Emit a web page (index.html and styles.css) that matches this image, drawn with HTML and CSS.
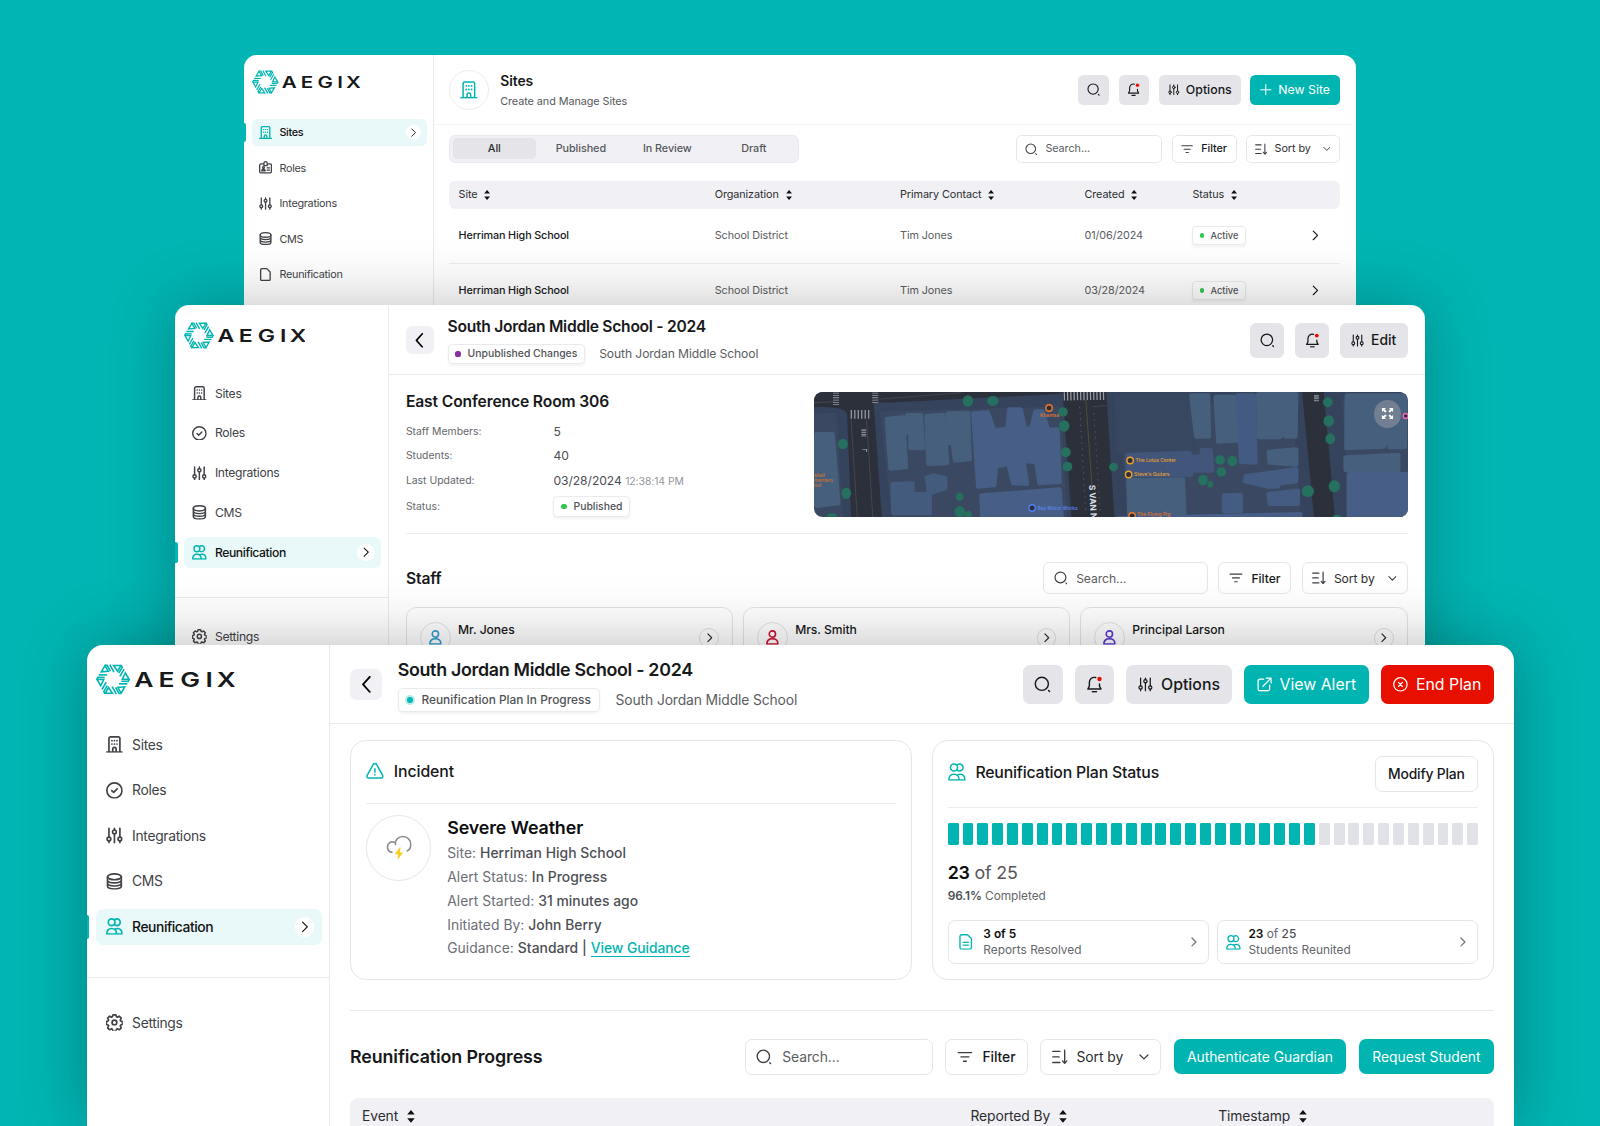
FILE: index.html
```
<!DOCTYPE html>
<html lang="en">
<head>
    <meta charset="UTF-8">
    <meta name="viewport" content="width=device-width, initial-scale=1.0">
    <title>Aegix</title>
    <link rel="stylesheet" href="styles.css">
</head>
<body>
    <!-- Icon sprite -->
    <svg class="sprite" xmlns="http://www.w3.org/2000/svg">
        <symbol id="logo" viewBox="0 0 140 31">
            <g transform="translate(17.2 15.5)" fill="none" stroke="#00b5b1" stroke-width="1.6">
                <g id="logo-part">
                    <path d="M.6-14H8L4.6-8.2Z"/>
                    <path d="M-3.3-14.8.9-7.4M-8.2-14.2-5.9-14.2-2.6-8.2"/>
                </g>
                <use href="#logo-part" transform="rotate(60)"/>
                <use href="#logo-part" transform="rotate(120)"/>
                <use href="#logo-part" transform="rotate(180)"/>
                <use href="#logo-part" transform="rotate(240)"/>
                <use href="#logo-part" transform="rotate(300)"/>
            </g>
            <text class="logo-text" transform="scale(1.3 1)" x="29.6 48.6 65.4 85 93.8" y="22.8">AEGIX</text>
        </symbol>
        <symbol id="building" viewBox="0 0 20 20">
            <path d="M1 19h18M3.500 19V3a2 2 0 0 1 2-2h9a2 2 0 0 1 2 2v16M8 19v-3.500a2 2 0 0 1 4 0V19"/>
            <path d="M7 5.500h.1M10 5.500h.1M13 5.500h.1M7 9.500h.1M10 9.500h.1M13 9.500h.1" stroke-width="2"/>
        </symbol>
        <symbol id="check" viewBox="0 0 20 20">
            <circle cx="10" cy="10" r="9"/><path d="m6.800 10.200 2.300 2.200 4.200-4.300"/>
        </symbol>
        <symbol id="sliders" viewBox="0 0 20 20">
            <path d="M3.500 1.500V12M3.500 16.500v2M10 1.500v2M10 8v10.500M16.500 1.500V12M16.500 16.500v2"/>
            <circle cx="3.500" cy="14.200" r="2.200"/><circle cx="10" cy="5.800" r="2.200"/><circle cx="16.500" cy="14.200" r="2.200"/>
        </symbol>
        <symbol id="database" viewBox="0 0 20 20">
            <ellipse cx="10" cy="4.500" rx="8.200" ry="3.500"/>
            <path d="M1.800 4.500v11c0 2 3.700 3.500 8.200 3.500s8.200-1.500 8.200-3.500v-11M1.800 8.200c0 2 3.700 3.500 8.200 3.500s8.200-1.500 8.200-3.500M1.800 11.900c0 2 3.700 3.500 8.200 3.500s8.200-1.500 8.200-3.500"/>
        </symbol>
        <symbol id="users" viewBox="0 0 20 20">
            <circle cx="6.700" cy="5" r="4"/>
            <path d="M10 2.300A4 4 0 1 1 10 7.700M1 19c0-4 2.200-6.500 5.600-6.500s5.900 2.500 5.900 6.500ZM10.500 13.500c1-.7 2-1 3.100-1 3.400 0 5.400 2.500 5.400 6.500h-6.500"/>
        </symbol>
        <symbol id="user" viewBox="0 0 20 20">
            <circle cx="10" cy="5.500" r="4.300"/><path d="M2.500 19c0-4.500 3-7 7.500-7s7.500 2.500 7.500 7Z"/>
        </symbol>
        <symbol id="roles" viewBox="0 0 20 20">
            <path d="M7 4.500H3a2 2 0 0 0-2 2V16a2 2 0 0 0 2 2h14a2 2 0 0 0 2-2V6.500a2 2 0 0 0-2-2h-4M7.500 7V3.500a2.500 2.500 0 0 1 5 0V7ZM12.500 10.500h3.500M12.500 14h3.500M4 15c0-3 5.500-3 5.500 0Z"/>
            <circle cx="6.800" cy="10" r="1.500"/>
        </symbol>
        <symbol id="file" viewBox="0 0 20 20">
            <path d="M4.500 1H12l5 5v11a2 2 0 0 1-2 2H4.500a2 2 0 0 1-2-2V3a2 2 0 0 1 2-2Z"/>
        </symbol>
        <symbol id="report" viewBox="0 0 20 20">
            <path d="M4.500 1H12l5 5v11a2 2 0 0 1-2 2H4.500a2 2 0 0 1-2-2V3a2 2 0 0 1 2-2ZM6.500 10.500h6.500M6.500 14h6.500"/>
        </symbol>
        <symbol id="gear" viewBox="0 0 20 20">
            <circle cx="10" cy="10" r="2.800"/>
            <path d="M8.300 1h3.400l.7 2.300 1.100.5 2.200-1.200 2.400 2.400-1.200 2.200.5 1.100 2.100.7v3.400l-2.100.7-.5 1.100 1.200 2.200-2.400 2.400-2.200-1.200-1.100.5-.7 2.300H8.300l-.7-2.300-1.100-.5-2.200 1.200-2.400-2.400 1.200-2.200-.5-1.100L.500 12.400V9l2.100-.7.5-1.100L1.900 5l2.400-2.400 2.200 1.200 1.100-.5Z"/>
        </symbol>
        <symbol id="search" viewBox="0 0 20 20">
            <circle cx="9.300" cy="9.300" r="7.800"/><path d="m17.300 17.300 1.200 1.200"/>
        </symbol>
        <symbol id="bell" viewBox="0 0 20 20">
            <path d="M11.500 1.800C7 .8 4 4 4 7.500V12l-1.800 3.500h15.600L16 12V9.500M7.500 18.800h5"/>
            <circle cx="16" cy="3.500" r="2.600" fill="#e60f00" stroke="none"/>
        </symbol>
        <symbol id="filter" viewBox="0 0 20 20"><path d="M1.500 4.500h17M5 10h10M8.200 15.500h3.600"/></symbol>
        <symbol id="sort" viewBox="0 0 20 20"><path d="M1 3h9M1 10h8M1 17h9M16 1.500v16M13.200 15l2.800 3 2.800-3"/></symbol>
        <symbol id="chev-r" viewBox="0 0 20 20"><path d="m6 2 8 8-8 8"/></symbol>
        <symbol id="chev-l" viewBox="0 0 20 20"><path d="m14 1-8 9 8 9"/></symbol>
        <symbol id="chev-d" viewBox="0 0 20 20"><path d="m2 6 8 8 8-8"/></symbol>
        <symbol id="updown" viewBox="0 0 8 13"><path d="M4 0 7.800 4.600H.2ZM4 13 .2 8.400h7.600Z" fill="#111" stroke="none"/></symbol>
        <symbol id="plus" viewBox="0 0 20 20"><path d="M10 1v18M1 10h18"/></symbol>
        <symbol id="external" viewBox="0 0 20 20">
            <path d="M9 3H4a2.500 2.500 0 0 0-2.500 2.500V16A2.500 2.500 0 0 0 4 18.500h10.500A2.500 2.500 0 0 0 17 16v-5M12.500 1.500H19V8M19 1.500l-11 11"/>
        </symbol>
        <symbol id="end" viewBox="0 0 20 20"><circle cx="10" cy="10" r="9"/><path d="m7.300 7.300 5.400 5.400M12.700 7.300l-5.400 5.400"/></symbol>
        <symbol id="warning" viewBox="0 0 20 20">
            <path d="M8.300 2.500a2 2 0 0 1 3.400 0l7 12.500a2 2 0 0 1-1.700 3H3a2 2 0 0 1-1.700-3ZM10 7.500v4M10 14v.5"/>
        </symbol>
        <symbol id="storm" viewBox="0 0 26 26">
            <path d="M6 17.500C3.500 17 1.500 15 1.500 12a5 5 0 0 1 7-4.700M9.500 9.500C9 5 12.500 1.500 17 1.500S25 5 25 9.500c0 3-1.500 5.500-3.500 6.500" stroke="#8b8d91" stroke-width="1.700"/>
            <path d="M14 12.500 8.800 19.500h3.600l-.9 5.800 5.800-7.600h-3.500l1-5.200Z" fill="#fbc916" stroke="none"/>
        </symbol>
        <symbol id="expand" viewBox="0 0 14 14">
            <g fill="#fff" stroke="none">
                <path d="M1 1h4.500L4 2.500 6 4.500 4.500 6l-2-2L1 5.500Z"/>
                <path d="M13 1v4.500L11.500 4l-2 2L8 4.500l2-2L8.500 1Z"/>
                <path d="M1 13V8.500L2.500 10l2-2L6 9.500l-2 2L5.500 13Z"/>
                <path d="M13 13H8.500l1.500-1.500-2-2L9.500 8l2 2L13 8.500Z"/>
            </g>
        </symbol>
    </svg>

    <!-- Sites list -->
    <div class="window window-sites">
        <div class="screen">
            <aside class="sidebar">
                <svg class="logo"><use href="#logo"/></svg>
                <nav class="nav">
                    <a class="nav-item active"><svg class="icon"><use href="#building"/></svg>Sites<span class="nav-arrow"><svg class="icon"><use href="#chev-r"/></svg></span></a>
                    <a class="nav-item"><svg class="icon"><use href="#roles"/></svg>Roles</a>
                    <a class="nav-item"><svg class="icon"><use href="#sliders"/></svg>Integrations</a>
                    <a class="nav-item"><svg class="icon"><use href="#database"/></svg>CMS</a>
                    <a class="nav-item"><svg class="icon"><use href="#file"/></svg>Reunification</a>
                </nav>
            </aside>
            <main class="main">
                <header class="header header-tall">
                    <div class="page-icon"><svg class="icon"><use href="#building"/></svg></div>
                    <div class="heading">
                        <h1 class="page-title">Sites</h1>
                        <p class="page-sub">Create and Manage Sites</p>
                    </div>
                    <div class="actions">
                        <button class="btn btn-square"><svg class="icon"><use href="#search"/></svg></button>
                        <button class="btn btn-square"><svg class="icon"><use href="#bell"/></svg></button>
                        <button class="btn btn-options"><svg class="icon"><use href="#sliders"/></svg>Options</button>
                        <button class="btn btn-teal btn-new"><svg class="icon"><use href="#plus"/></svg>New Site</button>
                    </div>
                </header>
                <div class="content content-sites">
                    <div class="toolbar">
                        <div class="tabs">
                            <span class="tab selected">All</span>
                            <span class="tab">Published</span>
                            <span class="tab">In Review</span>
                            <span class="tab">Draft</span>
                        </div>
                        <div class="controls">
                            <div class="field search"><svg class="icon"><use href="#search"/></svg>Search...</div>
                            <div class="field filter"><svg class="icon"><use href="#filter"/></svg>Filter</div>
                            <div class="field sort"><svg class="icon"><use href="#sort"/></svg>Sort by<svg class="icon caret"><use href="#chev-d"/></svg></div>
                        </div>
                    </div>
                    <div class="table">
                        <div class="table-row table-head">
                            <span>Site<svg class="updown"><use href="#updown"/></svg></span>
                            <span>Organization<svg class="updown"><use href="#updown"/></svg></span>
                            <span>Primary Contact<svg class="updown"><use href="#updown"/></svg></span>
                            <span>Created<svg class="updown"><use href="#updown"/></svg></span>
                            <span>Status<svg class="updown"><use href="#updown"/></svg></span>
                        </div>
                        <div class="table-row">
                            <span class="cell-name">Herriman High School</span>
                            <span>School District</span>
                            <span>Tim Jones</span>
                            <span>01/06/2024</span>
                            <span><span class="badge badge-small"><i class="dot green"></i>Active</span></span>
                            <svg class="icon row-arrow"><use href="#chev-r"/></svg>
                        </div>
                        <div class="table-row">
                            <span class="cell-name">Herriman High School</span>
                            <span>School District</span>
                            <span>Tim Jones</span>
                            <span>03/28/2024</span>
                            <span><span class="badge badge-small"><i class="dot green"></i>Active</span></span>
                            <svg class="icon row-arrow"><use href="#chev-r"/></svg>
                        </div>
                    </div>
                </div>
            </main>
        </div>
    </div>

    <!-- Room details -->
    <div class="window window-room">
        <div class="screen">
            <aside class="sidebar">
                <svg class="logo"><use href="#logo"/></svg>
                <nav class="nav">
                    <a class="nav-item"><svg class="icon"><use href="#building"/></svg>Sites</a>
                    <a class="nav-item"><svg class="icon"><use href="#check"/></svg>Roles</a>
                    <a class="nav-item"><svg class="icon"><use href="#sliders"/></svg>Integrations</a>
                    <a class="nav-item"><svg class="icon"><use href="#database"/></svg>CMS</a>
                    <a class="nav-item active"><svg class="icon"><use href="#users"/></svg>Reunification<span class="nav-arrow"><svg class="icon"><use href="#chev-r"/></svg></span></a>
                </nav>
                <nav class="nav nav-bottom">
                    <a class="nav-item"><svg class="icon"><use href="#gear"/></svg>Settings</a>
                </nav>
            </aside>
            <main class="main">
                <header class="header">
                    <button class="back"><svg class="icon"><use href="#chev-l"/></svg></button>
                    <div class="heading">
                        <h1 class="title">South Jordan Middle School - 2024</h1>
                        <div class="meta"><span class="badge"><i class="dot purple"></i>Unpublished Changes</span><span class="meta-text">South Jordan Middle School</span></div>
                    </div>
                    <div class="actions">
                        <button class="btn btn-square"><svg class="icon"><use href="#search"/></svg></button>
                        <button class="btn btn-square"><svg class="icon"><use href="#bell"/></svg></button>
                        <button class="btn btn-edit"><svg class="icon"><use href="#sliders"/></svg>Edit</button>
                    </div>
                </header>
                <div class="content content-room">
                    <div class="room">
                        <div class="room-info">
                            <h2 class="section-title">East Conference Room 306</h2>
                            <dl class="facts">
                                <dt>Staff Members:</dt><dd>5</dd>
                                <dt>Students:</dt><dd>40</dd>
                                <dt>Last Updated:</dt><dd>03/28/2024 <small>12:38:14 PM</small></dd>
                                <dt>Status:</dt><dd><span class="badge"><i class="dot green"></i>Published</span></dd>
                            </dl>
                        </div>
                        <div class="map">
                            <svg class="map-svg" viewBox="0 0 593.5 125" preserveAspectRatio="none">
                                <rect width="594" height="125" fill="#3a4961"/>
                                <g transform="scale(.408 .3333) translate(-59 -66)">
                                    <!-- roads -->
                                    <g fill="#35435c">
                                        <path d="M59 66H1513V80L59 130ZM110 66H215L250 441H130ZM660 66H800L830 441H680ZM1230 66H1350L1375 441H1250Z"/>
                                    </g>
                                    <path d="M795 72H985L995 240 800 250Z" fill="#384760"/>
                                    <g fill="#2b303a">
                                        <path d="M59 66H670L660 72 235 98 205 96 225 441H150L140 130Q130 108 59 112Z"/>
                                        <path d="M668 66H775L795 441H690Z"/>
                                        <path d="M1255 66H1308L1335 441H1284Z"/>
                                    </g>
                                    <g stroke="#4a4e58" stroke-width="2" fill="none">
                                        <path d="M59 98 110 95M215 88 420 68M150 150 165 441M188 150 203 441M742 110 775 107"/>
                                        <path d="M725 90 740 345" stroke="#5d5738"/>
                                        <path d="M710 110 725 430M745 130 760 430" stroke="#6a6d76" stroke-dasharray="4 14"/>
                                    </g>
                                    <g stroke="#9a9ea7" fill="none">
                                        <path d="M671 79 775 77" stroke-width="25" stroke-dasharray="3 5"/>
                                        <path d="M149 133H199" stroke-width="26" stroke-dasharray="3 5.500"/>
                                        <path d="M113 68V105M209 68V98" stroke-width="15" stroke-dasharray="2.500 4.500"/>
                                        <path d="M181 178V200M1290 75V95" stroke-width="12" stroke-dasharray="5 2" stroke="#7d818a"/>
                                        <path d="M178 238H188V246" stroke-width="2.500"/>
                                    </g>
                                    <!-- buildings -->
                                    <g fill="#465f7d" stroke="#465f7d" stroke-width="12" stroke-linejoin="round">
                                        <path d="M65 192H104L118 400 65 408Z"/>
                                        <path d="M238 146 276 142 284 292 247 296ZM288 135H320L326 235H296V190H288ZM335 138 375 134 385 280 340 282ZM388 130 436 128 440 268 405 272 400 220H390Z"/>
                                        <path d="M984 76H1024L1026 200H996ZM1044 80H1088L1096 212 1050 215ZM1148 72H1240L1238 200H1215L1200 185V202H1150Z"/>
                                        <path d="M830 330 962 328 966 435H832Z"/>
                                        <path d="M1174 245 1240 238V284L1176 278ZM1365 76H1508L1506 232H1470V180L1455 230 1364 235ZM1362 262 1490 254V300H1362Z"/>
                                    </g>
                                    <g fill="#475f86" stroke="#475f86" stroke-width="12" stroke-linejoin="round">
                                        <path d="M450 130 484 127 500 180 534 176 538 118 565 118 575 175 592 176 602 124H618L632 180 655 178 660 336 612 340 604 276 572 274 580 342 548 340 536 282 504 290 500 346 462 350Z"/>
                                        <path d="M470 376 660 358 665 441H472Z"/>
                                        <path d="M1098 76H1136L1140 278 1106 276Z" fill="#435b83" stroke="#435b83"/>
                                        <path d="M828 254 978 248 984 262 1010 258V240H1030L1034 302H982V314L828 316Z" fill="#41567a" stroke="#41567a"/>
                                        <path d="M1118 318 1240 298V334L1195 342V350H1170L1115 334ZM1064 376 1104 374V424H1064ZM1174 372 1244 362V402L1176 402Z" fill="#445c82" stroke="#445c82"/>
                                        <path d="M1370 312H1513V441H1370Z"/>
                                        <path d="M252 342 300 340V372H342V430H254ZM336 322 352 316 380 324V355L342 370Z" fill="#435b7c" stroke="#435b7c"/>
                                        <path d="M805 445 1250 432V450Z"/>
                                    </g>
                                    <!-- trees -->
                                    <g fill="#25705f">
                                        <ellipse cx="436" cy="93" rx="13" ry="17"/><ellipse cx="497" cy="93" rx="14" ry="15"/>
                                        <ellipse cx="669" cy="126" rx="12" ry="14"/><ellipse cx="672" cy="168" rx="13" ry="17"/>
                                        <ellipse cx="676" cy="247" rx="12" ry="15"/><ellipse cx="680" cy="290" rx="12" ry="14"/>
                                        <ellipse cx="130" cy="222" rx="12" ry="16"/><ellipse cx="138" cy="370" rx="12" ry="17"/>
                                        <ellipse cx="793" cy="291" rx="11" ry="13"/><ellipse cx="1318" cy="97" rx="12" ry="15"/>
                                        <ellipse cx="1320" cy="153" rx="13" ry="17"/><ellipse cx="1324" cy="206" rx="12" ry="16"/>
                                        <ellipse cx="1269" cy="364" rx="15" ry="18"/><ellipse cx="1334" cy="349" rx="14" ry="18"/>
                                        <ellipse cx="1054" cy="270" rx="12" ry="14"/><ellipse cx="1084" cy="273" rx="12" ry="16"/>
                                        <ellipse cx="1057" cy="306" rx="12" ry="14"/><ellipse cx="1012" cy="330" rx="12" ry="16"/>
                                        <ellipse cx="1030" cy="343" rx="7" ry="10"/><ellipse cx="416" cy="425" rx="13" ry="17"/>
                                        <ellipse cx="416" cy="380" rx="9" ry="12"/><ellipse cx="437" cy="435" rx="9" ry="12"/>
                                        <ellipse cx="103" cy="438" rx="12" ry="8"/><ellipse cx="1340" cy="441" rx="10" ry="7"/>
                                    </g>
                                </g>
                                <g class="pins">
                                    <circle cx="235" cy="16" r="3.200" stroke="#f07a2a"/>
                                    <circle cx="316" cy="68.500" r="3.200" stroke="#f0a02a"/>
                                    <circle cx="314.500" cy="82.500" r="3.200" stroke="#f0a02a"/>
                                    <circle cx="318" cy="124" r="3.200" stroke="#f07a2a"/>
                                    <circle cx="218" cy="116" r="3.200" stroke="#4f7df0"/>
                                    <circle cx="591.500" cy="24" r="2.500" stroke="#f06ab4"/>
                                </g>
                                <g class="map-text">
                                    <text x="226" y="25" fill="#e8742c">Khamsa</text>
                                    <text x="321.500" y="70.500" fill="#eda02e">The Lotus Center</text>
                                    <text x="320" y="84.300" fill="#eda02e">Steve's Guitars</text>
                                    <text x="323" y="124" fill="#e8742c">The Flying Pig</text>
                                    <text x="223.500" y="118" fill="#5b86f2">Bay Motor Works</text>
                                    <text x="0" y="85.500" fill="#d4722e">shall</text>
                                    <text x="0" y="90.500" fill="#d4722e">mentary</text>
                                    <text x="0" y="95.500" fill="#d4722e">ool</text>
                                </g>
                                <text class="street" transform="translate(275 93) rotate(87)">S VAN N</text>
                            </svg>
                            <span class="map-expand"><svg><use href="#expand"/></svg></span>
                        </div>
                    </div>
                    <div class="toolbar toolbar-room">
                        <h2 class="section-title">Staff</h2>
                        <div class="controls">
                            <div class="field search"><svg class="icon"><use href="#search"/></svg>Search...</div>
                            <div class="field filter"><svg class="icon"><use href="#filter"/></svg>Filter</div>
                            <div class="field sort"><svg class="icon"><use href="#sort"/></svg>Sort by<svg class="icon caret"><use href="#chev-d"/></svg></div>
                        </div>
                    </div>
                    <div class="staff">
                        <div class="person">
                            <span class="avatar blue"><svg class="icon"><use href="#user"/></svg></span>
                            <div class="person-text"><b>Mr. Jones</b><span>Art Teacher</span></div>
                            <span class="round-arrow"><svg class="icon"><use href="#chev-r"/></svg></span>
                        </div>
                        <div class="person">
                            <span class="avatar red"><svg class="icon"><use href="#user"/></svg></span>
                            <div class="person-text"><b>Mrs. Smith</b><span>Art Teacher</span></div>
                            <span class="round-arrow"><svg class="icon"><use href="#chev-r"/></svg></span>
                        </div>
                        <div class="person">
                            <span class="avatar violet"><svg class="icon"><use href="#user"/></svg></span>
                            <div class="person-text"><b>Principal Larson</b><span>Admin</span></div>
                            <span class="round-arrow"><svg class="icon"><use href="#chev-r"/></svg></span>
                        </div>
                    </div>
                </div>
            </main>
        </div>
    </div>

    <!-- Reunification plan -->
    <div class="window window-plan">
        <div class="screen">
            <aside class="sidebar">
                <svg class="logo"><use href="#logo"/></svg>
                <nav class="nav">
                    <a class="nav-item"><svg class="icon"><use href="#building"/></svg>Sites</a>
                    <a class="nav-item"><svg class="icon"><use href="#check"/></svg>Roles</a>
                    <a class="nav-item"><svg class="icon"><use href="#sliders"/></svg>Integrations</a>
                    <a class="nav-item"><svg class="icon"><use href="#database"/></svg>CMS</a>
                    <a class="nav-item active"><svg class="icon"><use href="#users"/></svg>Reunification<span class="nav-arrow"><svg class="icon"><use href="#chev-r"/></svg></span></a>
                </nav>
                <nav class="nav nav-bottom">
                    <a class="nav-item"><svg class="icon"><use href="#gear"/></svg>Settings</a>
                </nav>
            </aside>
            <main class="main">
                <header class="header">
                    <button class="back"><svg class="icon"><use href="#chev-l"/></svg></button>
                    <div class="heading">
                        <h1 class="title">South Jordan Middle School - 2024</h1>
                        <div class="meta"><span class="badge"><i class="dot teal"></i>Reunification Plan In Progress</span><span class="meta-text">South Jordan Middle School</span></div>
                    </div>
                    <div class="actions">
                        <button class="btn btn-square"><svg class="icon"><use href="#search"/></svg></button>
                        <button class="btn btn-square"><svg class="icon"><use href="#bell"/></svg></button>
                        <button class="btn btn-options"><svg class="icon"><use href="#sliders"/></svg>Options</button>
                        <button class="btn btn-teal btn-alert"><svg class="icon"><use href="#external"/></svg>View Alert</button>
                        <button class="btn btn-red"><svg class="icon"><use href="#end"/></svg>End Plan</button>
                    </div>
                </header>
                <div class="content content-plan">
                    <div class="cards">
                        <section class="card">
                            <div class="card-head incident-head"><svg class="icon"><use href="#warning"/></svg>Incident</div>
                            <div class="incident">
                                <div class="incident-icon"><svg><use href="#storm"/></svg></div>
                                <div class="incident-text">
                                    <h3>Severe Weather</h3>
                                    <p>Site: <b>Herriman High School</b></p>
                                    <p>Alert Status: <b>In Progress</b></p>
                                    <p>Alert Started: <b>31 minutes ago</b></p>
                                    <p>Initiated By: <b>John Berry</b></p>
                                    <p>Guidance: <b>Standard |</b> <a class="link">View Guidance</a></p>
                                </div>
                            </div>
                        </section>
                        <section class="card">
                            <div class="card-head status-head"><svg class="icon"><use href="#users"/></svg>Reunification Plan Status<span class="field modify">Modify Plan</span></div>
                            <div class="bars">
                                <i class="on"></i><i class="on"></i><i class="on"></i><i class="on"></i><i class="on"></i>
                                <i class="on"></i><i class="on"></i><i class="on"></i><i class="on"></i><i class="on"></i>
                                <i class="on"></i><i class="on"></i><i class="on"></i><i class="on"></i><i class="on"></i>
                                <i class="on"></i><i class="on"></i><i class="on"></i><i class="on"></i><i class="on"></i>
                                <i class="on"></i><i class="on"></i><i class="on"></i><i class="on"></i><i class="on"></i>
                                <i></i><i></i><i></i><i></i><i></i><i></i><i></i><i></i><i></i><i></i><i></i>
                            </div>
                            <p class="count"><b>23</b> of 25</p>
                            <p class="percent"><b>96.1%</b> Completed</p>
                            <div class="stats">
                                <div class="stat">
                                    <svg class="icon"><use href="#report"/></svg>
                                    <div><p><b>3 of 5</b></p><p>Reports Resolved</p></div>
                                    <svg class="icon stat-arrow"><use href="#chev-r"/></svg>
                                </div>
                                <div class="stat stat-users">
                                    <svg class="icon"><use href="#users"/></svg>
                                    <div><p><b>23</b> of <em>25</em></p><p>Students Reunited</p></div>
                                    <svg class="icon stat-arrow"><use href="#chev-r"/></svg>
                                </div>
                            </div>
                        </section>
                    </div>
                    <div class="toolbar toolbar-plan">
                        <h2 class="section-title">Reunification Progress</h2>
                        <div class="controls">
                            <div class="field search"><svg class="icon"><use href="#search"/></svg>Search...</div>
                            <div class="field filter"><svg class="icon"><use href="#filter"/></svg>Filter</div>
                            <div class="field sort"><svg class="icon"><use href="#sort"/></svg>Sort by<svg class="icon caret"><use href="#chev-d"/></svg></div>
                            <button class="btn btn-teal btn-auth">Authenticate Guardian</button>
                            <button class="btn btn-teal btn-request">Request Student</button>
                        </div>
                    </div>
                    <div class="table-row table-head events-head">
                        <span>Event<svg class="updown"><use href="#updown"/></svg></span>
                        <span>Reported By<svg class="updown"><use href="#updown"/></svg></span>
                        <span>Timestamp<svg class="updown"><use href="#updown"/></svg></span>
                    </div>
                </div>
            </main>
        </div>
    </div>
</body>
</html>
```
FILE: styles.css
```
* {
    margin: 0;
    padding: 0;
    box-sizing: border-box;
}

body {
    position: relative;
    width: 1600px;
    height: 1126px;
    overflow: hidden;
    background: #00b5b3;
    font-family: Inter, "Liberation Sans", sans-serif;
    letter-spacing: -0.07px;
    color: #17181a;
}

button {
    border: none;
    font-family: inherit;
}

.sprite {
    position: absolute;
    width: 0;
    height: 0;
}

/* stacked windows, all share the same 1440px screen at a different zoom */
.window {
    position: absolute;
    bottom: 0;
    background: #fff;
    overflow: hidden;
    border-radius: 16px 16px 0 0;
}

.window-sites {
    left: 244px;
    top: 55px;
    width: 1111.5px;
    border-radius: 13px 13px 0 0;
}

.window-room {
    left: 175px;
    top: 305px;
    width: 1250px;
    border-radius: 14px 14px 0 0;
    box-shadow: 0 0 64px rgba(0, 0, 0, 0.25);
}

.window-plan {
    left: 86.5px;
    top: 645px;
    width: 1427px;
    box-shadow: 0 0 64px rgba(0, 0, 0, 0.28);
}

.screen {
    display: flex;
    width: 1440px;
    height: 1024px;
}

.window-sites .screen {
    zoom: 0.7718;
}

.window-room .screen {
    zoom: 0.868;
    padding-top: 1px;
}

.window-plan .screen {
    zoom: 0.991;
}

.icon {
    width: 17px;
    height: 17px;
    flex: none;
    fill: none;
    stroke: currentColor;
    stroke-width: 1.7;
    stroke-linecap: round;
    stroke-linejoin: round;
}

/* sidebar */
.sidebar {
    flex: none;
    width: 246px;
    border-right: 1px solid #e9eaec;
    padding-top: 19px;
}

.logo {
    display: block;
    width: 140px;
    height: 31px;
    margin-left: 10px;
}

.logo-text {
    font-family: Inter, sans-serif;
    font-size: 20.5px;
    font-weight: 600;
    letter-spacing: 0;
    fill: #17181a;
}

.nav {
    display: flex;
    flex-direction: column;
    gap: 10px;
    margin-top: 32.5px;
    padding: 0 7px 0 10px;
}

.nav-bottom {
    margin-top: 32.5px;
    padding-top: 27px;
    border-top: 1px solid #e9eaec;
}

.nav-item {
    position: relative;
    display: flex;
    align-items: center;
    gap: 9px;
    height: 36px;
    padding: 0 10px;
    border-radius: 7px;
    font-size: 14px;
    letter-spacing: -0.33px;
    color: #404246;
}

.nav-item .icon {
    stroke-width: 2;
}

.nav-item.active {
    background: #e9f8f8;
    color: #111;
    font-weight: 500;
    letter-spacing: -0.45px;
}

.nav-item.active > .icon {
    color: #00b5b1;
}

.nav-item.active::before {
    content: "";
    position: absolute;
    left: -10px;
    top: 6px;
    width: 3px;
    height: 24px;
    border-radius: 0 3px 3px 0;
    background: #00b5b3;
}

.nav-arrow {
    display: flex;
    align-items: center;
    justify-content: center;
    width: 20px;
    height: 20px;
    margin-left: auto;
    margin-right: -2px;
    border-radius: 50%;
    background: #fff;
}

.nav-arrow .icon {
    width: 12px;
    height: 12px;
}

/* header */
.main {
    flex: 1;
}

.header {
    display: flex;
    align-items: center;
    height: 79.5px;
    padding: 1px 20px 0;
    border-bottom: 1px solid #e9eaec;
}

.header-tall {
    height: 91px;
    border-bottom-color: #f4f4f5;
}

.page-icon {
    display: flex;
    align-items: center;
    justify-content: center;
    width: 52px;
    height: 52px;
    border: 1.5px solid #ececee;
    border-radius: 50%;
    color: #00b5b1;
}

.page-icon .icon {
    width: 23px;
    height: 23px;
}

.page-icon + .heading {
    margin-left: 14px;
    padding-top: 4px;
}

.page-title {
    font-size: 18px;
    font-weight: 600;
    line-height: 25px;
}

.page-sub {
    font-size: 14px;
    line-height: 25px;
    color: #55575b;
}

.back {
    width: 32px;
    height: 32px;
    border-radius: 7px;
    background: #f1f0f4;
    display: flex;
    align-items: center;
    justify-content: center;
}

.back .icon {
    stroke-width: 2.2;
}

.back + .heading {
    margin-left: 16px;
    padding-top: 1px;
}

.title {
    font-size: 18px;
    font-weight: 600;
    line-height: 24px;
    letter-spacing: -0.3px;
}

.meta {
    display: flex;
    align-items: center;
    gap: 16px;
    margin-top: 6.5px;
}

.meta-text {
    font-size: 14px;
    letter-spacing: -0.12px;
    color: #5b5d61;
}

.badge {
    display: inline-flex;
    align-items: center;
    height: 24px;
    padding: 0 8px;
    border: 1px solid #e9eaec;
    border-radius: 5px;
    background: #fff;
    box-shadow: 0 2px 3px rgba(0, 0, 0, 0.05);
    font-size: 12px;
    font-weight: 500;
    letter-spacing: 0;
    color: #505256;
}

.badge-small {
    height: 25px;
}

.dot {
    width: 6px;
    height: 6px;
    margin-right: 8px;
    border-radius: 50%;
}

.dot.green {
    background: #2fc84f;
}

.dot.purple {
    background: #8a2fa5;
}

.dot.teal {
    width: 7px;
    height: 7px;
    background: #00b5b1;
    box-shadow: 0 0 0 2px #b5ecea;
}

.actions {
    display: flex;
    gap: 12px;
    margin-left: auto;
}

.btn {
    display: flex;
    align-items: center;
    justify-content: center;
    gap: 8px;
    height: 40px;
    border-radius: 7px;
    background: #e5e4e8;
    color: #17181a;
    font-size: 16px;
    font-weight: 500;
    white-space: nowrap;
}

.btn .icon {
    width: 15px;
    height: 15px;
}

.btn-square {
    width: 40px;
}

.btn-square .icon {
    width: 17px;
    height: 17px;
}

.btn-options {
    width: 107px;
}

.btn-edit {
    width: 78px;
}

.btn-new {
    width: 116px;
}

.btn-alert {
    width: 126px;
}

.btn-teal {
    background: #00b5b1;
    color: #fff;
    font-weight: 400;
}

.btn-red {
    width: 114px;
    background: #e60f00;
    color: #fff;
    font-weight: 400;
}

.btn-auth,
.btn-request {
    width: 174px;
    height: 35px;
    font-size: 14px;
}

.btn-request {
    width: 136px;
}

/* toolbars */
.content {
    padding: 0 20px;
}

.content-sites {
    padding-top: 12.5px;
}

.toolbar {
    display: flex;
    align-items: center;
    justify-content: space-between;
}

.tabs {
    display: flex;
    gap: 4px;
    padding: 3px;
    width: 453px;
    height: 36px;
    border: 1px solid #e9e9ed;
    border-radius: 8px;
    background: #f1f1f5;
}

.tab {
    flex: 1;
    display: flex;
    align-items: center;
    justify-content: center;
    border-radius: 6px;
    font-size: 14px;
    font-weight: 500;
    color: #55575b;
}

.tab.selected {
    background: #e5e4e8;
    color: #2c2d30;
}

.controls {
    display: flex;
    align-items: center;
    gap: 12px;
}

.field {
    display: flex;
    align-items: center;
    height: 36px;
    padding: 0 11px;
    border: 1px solid #e5e6e8;
    border-radius: 7px;
    background: #fff;
    font-size: 14px;
    white-space: nowrap;
}

.field .icon {
    width: 16px;
    height: 16px;
    color: #3c3e42;
}

.field .caret {
    width: 10px;
    height: 10px;
    margin-left: auto;
    stroke-width: 2.5;
}

.search {
    width: 190px;
    gap: 10px;
    color: #5b5d61;
}

.filter {
    width: 84px;
    gap: 10px;
    font-weight: 500;
}

.sort {
    width: 122px;
    gap: 9px;
    color: #2c2d30;
}

.section-title {
    font-size: 18px;
    font-weight: 600;
    letter-spacing: -0.13px;
}

/* tables */
.table {
    margin-top: 23.5px;
}

.table-row {
    display: grid;
    grid-template-columns: 332px 240px 239px 140px 1fr 44px;
    align-items: center;
    height: 71.5px;
    padding-left: 12px;
    border-bottom: 1px solid #ededef;
    font-size: 14px;
    letter-spacing: -0.1px;
    color: #5b5d61;
}

.table-head {
    height: 36px;
    border-bottom: none;
    border-radius: 8px;
    background: #f1f1f5;
    color: #2c2d30;
}

.table-row .cell-name {
    color: #17181a;
    font-weight: 500;
    letter-spacing: -0.18px;
}

.updown {
    width: 8px;
    height: 13px;
    margin-left: 9px;
    vertical-align: -2px;
}

.row-arrow {
    width: 14px;
    height: 14px;
    stroke-width: 2.2;
    color: #17181a;
    margin-left: 5px;
}

/* room */
.content-room {
    padding-top: 20px;
}

.room {
    display: flex;
    justify-content: space-between;
    padding-bottom: 18.5px;
    border-bottom: 1.5px solid #ededef;
}

.room-info .section-title {
    line-height: 22px;
}

.facts {
    display: grid;
    grid-template-columns: 170px auto;
    grid-auto-rows: 28px;
    align-items: center;
    margin-top: 9.5px;
}

.facts dt {
    font-size: 12px;
    letter-spacing: 0;
    color: #63666b;
}

.facts dd {
    font-size: 14px;
    color: #4c4e52;
}

.facts dt:nth-of-type(4),
.facts dd:nth-of-type(4) {
    padding-top: 4px;
}

.facts dd .badge {
    display: flex;
    width: max-content;
}

.facts small {
    font-size: 12px;
    color: #94969b;
}

.map {
    position: relative;
    width: 684px;
    height: 144px;
    border-radius: 10px;
    overflow: hidden;
}

.map-svg {
    display: block;
    width: 100%;
    height: 100%;
}

.pins circle {
    fill: #2b303a;
    stroke-width: 1.4;
}

.map-text {
    font-size: 4.9px;
    font-weight: 500;
    letter-spacing: 0;
}

.street {
    font-size: 8.5px;
    font-weight: 700;
    letter-spacing: 0;
    fill: #d9dce2;
}

.map-expand {
    position: absolute;
    top: 9px;
    right: 7px;
    display: flex;
    align-items: center;
    justify-content: center;
    width: 32px;
    height: 32px;
    border-radius: 50%;
    background: #727f93;
}

.map-expand svg {
    width: 15px;
    height: 15px;
}

.toolbar-room {
    margin-top: 32.5px;
}

.staff {
    display: grid;
    grid-template-columns: repeat(3, 1fr);
    gap: 11px;
    margin-top: 15.5px;
}

.person {
    display: flex;
    align-items: flex-start;
    height: 110px;
    padding: 16px 15px;
    border: 1px solid #e2e3e5;
    border-radius: 12px;
}

.avatar {
    display: flex;
    align-items: center;
    justify-content: center;
    width: 36px;
    height: 36px;
    border: 1.5px solid #e2e3e5;
    border-radius: 50%;
}

.avatar .icon {
    stroke-width: 2.1;
}

.avatar.blue {
    color: #2f9fd0;
}

.avatar.red {
    color: #cf1232;
}

.avatar.violet {
    color: #5b35d0;
}

.person-text {
    margin-left: 8px;
    font-size: 12px;
    color: #63666b;
}

.person-text b {
    display: block;
    font-size: 14px;
    font-weight: 500;
    line-height: 18px;
    color: #17181a;
}

.person-text span {
    display: block;
    margin-top: 5px;
    line-height: 18px;
}

.round-arrow {
    display: flex;
    align-items: center;
    justify-content: center;
    width: 23px;
    height: 23px;
    margin: 7px 0 0 auto;
    border: 1px solid #dedfe1;
    border-radius: 50%;
}

.round-arrow .icon {
    width: 11px;
    height: 11px;
    stroke-width: 2.4;
    color: #2c2d30;
}

/* plan */
.content-plan {
    padding-top: 16.5px;
}

.cards {
    display: grid;
    grid-template-columns: 1fr 1fr;
    gap: 20px;
    padding-bottom: 30.5px;
    border-bottom: 1.5px solid #e9eaec;
}

.card {
    height: 242px;
    padding: 15px;
    border: 1px solid #e5e6e8;
    border-radius: 16px;
}

.card-head {
    display: flex;
    align-items: center;
    gap: 10px;
    height: 52px;
    padding-bottom: 16px;
    border-bottom: 1.5px solid #ececee;
    font-size: 16px;
    font-weight: 500;
}

.card-head > .icon {
    width: 18px;
    height: 18px;
    color: #00b5b1;
    margin-top: -2px;
}

.incident-head {
    height: 48px;
    padding-bottom: 15px;
}

.status-head {
    padding-bottom: 17px;
    letter-spacing: -0.2px;
}

.modify {
    flex: none;
    width: 104px;
    margin: 3px 0 0 auto;
    padding: 0;
    justify-content: center;
    font-weight: 500;
}

.incident {
    display: flex;
    gap: 16px;
    padding-top: 12px;
}

.incident-icon {
    display: flex;
    align-items: center;
    justify-content: center;
    width: 66px;
    height: 66px;
    border: 1.5px solid #e5e6e8;
    border-radius: 50%;
}

.incident-icon svg {
    width: 26px;
    height: 26px;
    fill: none;
    stroke-linecap: round;
}

.incident-text h3 {
    font-size: 18px;
    font-weight: 600;
    line-height: 27px;
    letter-spacing: -0.1px;
    color: #0c0d0e;
}

.incident-text p {
    font-size: 14px;
    line-height: 24px;
    letter-spacing: 0.04px;
    color: #6b6e75;
}

.incident-text b {
    font-weight: 500;
    color: #4c4e54;
}

.link {
    color: #00b5b1;
    font-weight: 500;
    letter-spacing: -0.05px;
    border-bottom: 1px solid #00b5b1;
}

.bars {
    display: flex;
    gap: 4px;
    margin-top: 16px;
}

.bars i {
    flex: 1;
    height: 22px;
    border-radius: 1.5px;
    background: #e1e2e7;
}

.bars .on {
    background: #00b5b1;
}

.count {
    margin-top: 16px;
    font-size: 18px;
    line-height: 25px;
    letter-spacing: -0.2px;
    color: #55575d;
}

.count b,
.stat b {
    font-weight: 600;
    color: #0c0d0e;
}

.percent {
    margin-top: 2px;
    font-size: 12px;
    line-height: 17px;
    color: #63666b;
}

.percent b {
    font-weight: 600;
    color: #4c4e54;
}

.stats {
    display: grid;
    grid-template-columns: 1fr 1fr;
    gap: 8px;
    margin-top: 16px;
}

.stat {
    display: flex;
    align-items: center;
    height: 44px;
    padding: 0 9px;
    border: 1px solid #e5e6e8;
    border-radius: 7px;
    font-size: 12px;
    line-height: 16px;
    letter-spacing: 0;
    color: #63666b;
}

.stat em {
    font-style: normal;
    font-weight: 500;
    color: #4c4e54;
}

.stat .icon {
    width: 16px;
    height: 16px;
    color: #00b5b1;
    margin-right: 10px;
}

.stat-users {
    padding-left: 8px;
}

.stat-users .icon {
    width: 15px;
    height: 15px;
    margin-right: 8px;
}

.stat .stat-arrow {
    width: 10px;
    height: 10px;
    margin: 0 0 0 auto;
    stroke-width: 2.6;
    color: #74777c;
}

.toolbar-plan {
    margin-top: 28px;
}

.toolbar-plan .btn-request {
    margin-left: 1px;
}

.toolbar-plan .btn-auth {
    margin-left: 1px;
}

.events-head {
    grid-template-columns: 614px 250px 1fr;
    margin-top: 23.5px;
}
```
